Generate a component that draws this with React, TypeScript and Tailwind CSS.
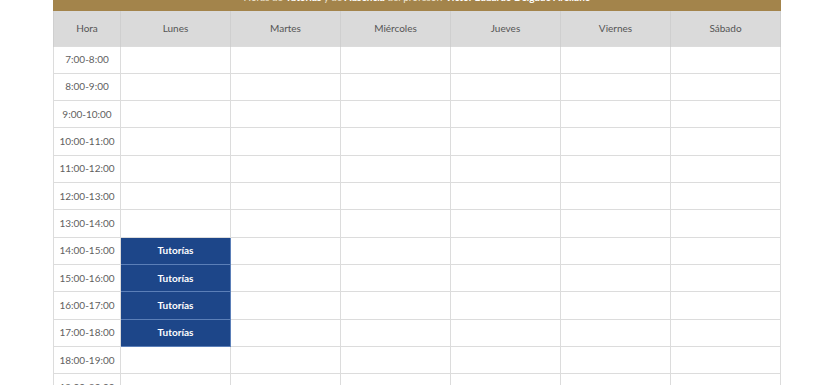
import React from "react";

const days = ["Lunes", "Martes", "Miércoles", "Jueves", "Viernes", "Sábado"];

const hours = [
  "7:00-8:00",
  "8:00-9:00",
  "9:00-10:00",
  "10:00-11:00",
  "11:00-12:00",
  "12:00-13:00",
  "13:00-14:00",
  "14:00-15:00",
  "15:00-16:00",
  "16:00-17:00",
  "17:00-18:00",
  "18:00-19:00",
  "19:00-20:00",
];

// slots with tutorías: [hour index, day index]
const tutorias = new Set(["7-0", "8-0", "9-0", "10-0"]);

export default function App() {
  return (
    <div
      className="w-[840px] h-[385px] overflow-hidden bg-white"
      style={{ fontFamily: "Lato, 'Noto Sans', sans-serif" }}
    >
      <div className="ml-[53px] w-[728px] -mt-[17px]">
        <div className="h-[28px] bg-[#a3844b] flex items-center justify-center text-[10px] text-[#efe6d3]">
          <span>
            Horas de <b className="text-white">Tutorías</b> y de{" "}
            <b className="text-white">Ausencia</b> del profesor:{" "}
            <b className="text-white">Víctor Eduardo Delgado Arellano</b>
          </span>
        </div>
        <table className="w-[728px] table-fixed border-collapse text-[10px] text-[#5f5f5f]">
          <colgroup>
            <col className="w-[67px]" />
            {days.map((d) => (
              <col key={d} className="w-[110px]" />
            ))}
          </colgroup>
          <thead>
            <tr className="h-[35px] bg-[#dadada] text-[#555]">
              <th className="font-normal border-x border-[#cfcfcf]">Hora</th>
              {days.map((d) => (
                <th key={d} className="font-normal border-x border-[#cfcfcf]">
                  {d}
                </th>
              ))}
            </tr>
          </thead>
          <tbody>
            {hours.map((h, i) => (
              <tr key={h} className="h-[27.33px]">
                <td className="text-center border border-[#dcdcdc] p-0">{h}</td>
                {days.map((d, j) =>
                  tutorias.has(`${i}-${j}`) ? (
                    <td
                      key={d}
                      className="text-center p-0 bg-[#1d4689] text-white font-bold border border-[#5b7fb8]"
                    >
                      Tutorías
                    </td>
                  ) : (
                    <td key={d} className="border border-[#dcdcdc] p-0" />
                  )
                )}
              </tr>
            ))}
          </tbody>
        </table>
      </div>
    </div>
  );
}
